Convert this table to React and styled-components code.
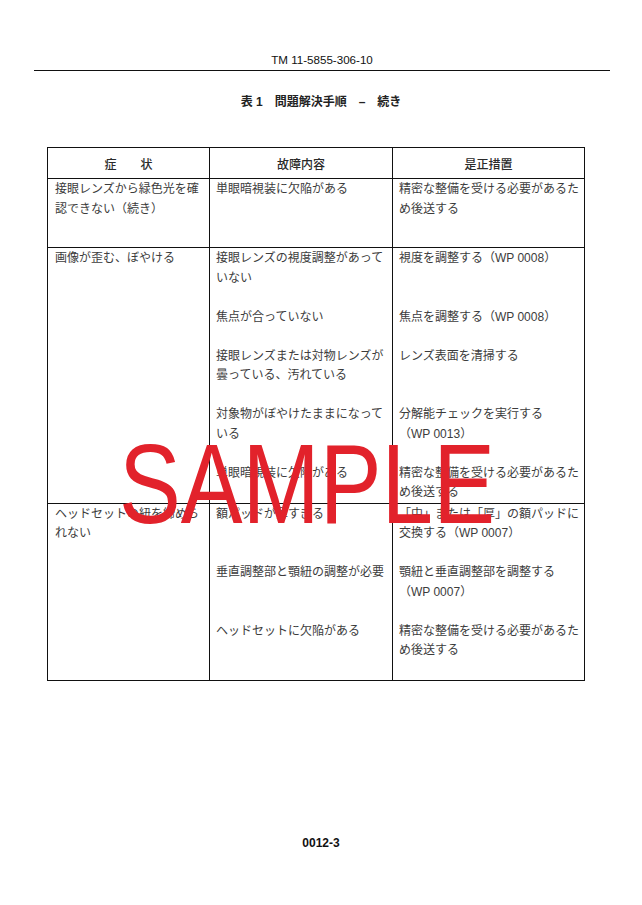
import styled, { createGlobalStyle } from 'styled-components';

const GlobalStyle = createGlobalStyle`
    html, body {
        margin: 0;
        padding: 0;
        background: #fff;
    }
    body {
        font-family: "Liberation Sans", "Noto Sans CJK JP", sans-serif;
        color: #3c3c3c;
    }
`;

const rows = [
    {
        symptom: ['接眼レンズから緑色光を確', '認できない（続き）'],
        entries: [
            { fault: ['単眼暗視装に欠陥がある'], action: ['精密な整備を受ける必要があるた', 'め後送する'], gap: 28 },
        ],
    },
    {
        symptom: ['画像が歪む、ぼやける'],
        entries: [
            { fault: ['接眼レンズの視度調整があって', 'いない'], action: ['視度を調整する（WP 0008）'] },
            { fault: ['焦点が合っていない'], action: ['焦点を調整する（WP 0008）'] },
            { fault: ['接眼レンズまたは対物レンズが', '曇っている、汚れている'], action: ['レンズ表面を清掃する'] },
            { fault: ['対象物がぼやけたままになって', 'いる'], action: ['分解能チェックを実行する', '（WP 0013）'] },
            { fault: ['単眼暗視装に欠陥がある'], action: ['精密な整備を受ける必要があるた', 'め後送する'], gap: 0 },
        ],
    },
    {
        symptom: ['ヘッドセットの紐を締めら', 'れない'],
        entries: [
            { fault: ['額パッドが薄すぎる'], action: ['「中」または「厚」の額パッドに', '交換する（WP 0007）'] },
            { fault: ['垂直調整部と顎紐の調整が必要'], action: ['顎紐と垂直調整部を調整する', '（WP 0007）'] },
            { fault: ['ヘッドセットに欠陥がある'], action: ['精密な整備を受ける必要があるた', 'め後送する'], gap: 19.5 },
        ],
    },
];

//Render an array of lines with explicit breaks
const Lines = ({ lines }) => lines.map((line, i) => (
    <Line key={i}>{line}</Line>
));

const App = () => {
    return (
        <>
            <GlobalStyle />
            <Page>
                <RunningHead>TM 11-5855-306-10</RunningHead>
                <Title>表 1　問題解決手順　–　続き</Title>

                <Table>
                    <HeadRow>
                        <HeadCell>症　　状</HeadCell>
                        <HeadCell $divided>故障内容</HeadCell>
                        <HeadCell $divided>是正措置</HeadCell>
                    </HeadRow>

                    {rows.map((row, r) => (
                        <BodyRow key={r}>
                            <SymptomCell>
                                <Lines lines={row.symptom} />
                            </SymptomCell>
                            <Entries>
                                {row.entries.map((entry, e) => (
                                    <Entry key={e}>
                                        <EntryCell $gap={entry.gap ?? 19.5}>
                                            <Lines lines={entry.fault} />
                                        </EntryCell>
                                        <EntryCell $gap={entry.gap ?? 19.5}>
                                            <Lines lines={entry.action} />
                                        </EntryCell>
                                    </Entry>
                                ))}
                            </Entries>
                        </BodyRow>
                    ))}
                </Table>

                <Folio>0012-3</Folio>

                <Watermark>SAMPLE</Watermark>
            </Page>
        </>
    );
}

export default App;

const Page = styled.div`
    position: relative;
    width: 642px;
    height: 905px;
    padding-top: 53px;
    box-sizing: border-box;
    overflow: hidden;
`;

const RunningHead = styled.div`
    margin: 0 32px 0 34px;
    padding-bottom: 3px;
    border-bottom: 1px solid #111;
    font-size: 11.6px;
    line-height: 14px;
    text-align: center;
    color: #111;
`;

const Title = styled.div`
    margin-top: 23px;
    font-size: 12px;
    line-height: 16px;
    font-weight: 700;
    text-align: center;
    color: #222;
`;

const Table = styled.div`
    margin: 37px 0 0 47px;
    width: 538px;
    box-sizing: border-box;
    border: 1px solid #111;
    border-bottom: none;
`;

const HeadRow = styled.div`
    display: grid;
    grid-template-columns: 161px 183px 192px;
    height: 31px;
    box-sizing: border-box;
    border-bottom: 1px solid #111;
`;

const HeadCell = styled.div`
    display: flex;
    align-items: center;
    justify-content: center;
    font-size: 12px;
    font-weight: 500;
    color: #2a2a2a;
    box-sizing: border-box;
    border-left: ${props => props.$divided ? '1px solid #111' : 'none'};
`;

const BodyRow = styled.div`
    display: grid;
    grid-template-columns: 161px 375px;
    border-bottom: 1px solid #111;
`;

const SymptomCell = styled.div`
    padding: 1px 6px 0 7px;
    font-size: 12px;
    line-height: 19.5px;
    white-space: nowrap;
`;

const Entries = styled.div`
    display: flex;
    flex-direction: column;
`;

const Entry = styled.div`
    display: grid;
    grid-template-columns: 183px 192px;

    &:first-child > div {
        padding-top: 1px;
    }
`;

const EntryCell = styled.div`
    box-sizing: border-box;
    border-left: 1px solid #111;
    padding: 0 4px ${props => props.$gap}px 6px;
    font-size: 12px;
    line-height: 19.5px;
    white-space: nowrap;
`;

const Line = styled.span`
    display: block;
`;

const Folio = styled.div`
    margin-top: 155px;
    font-size: 12px;
    line-height: 14px;
    font-weight: 700;
    text-align: center;
    color: #111;
`;

const Watermark = styled.div`
    position: absolute;
    left: 119px;
    top: 428px;
    font-family: "Liberation Sans", Arial, sans-serif;
    font-size: 113px;
    line-height: 1;
    color: #e2222b;
    white-space: nowrap;
    transform: scaleX(0.82);
    transform-origin: left top;
    pointer-events: none;
`;
